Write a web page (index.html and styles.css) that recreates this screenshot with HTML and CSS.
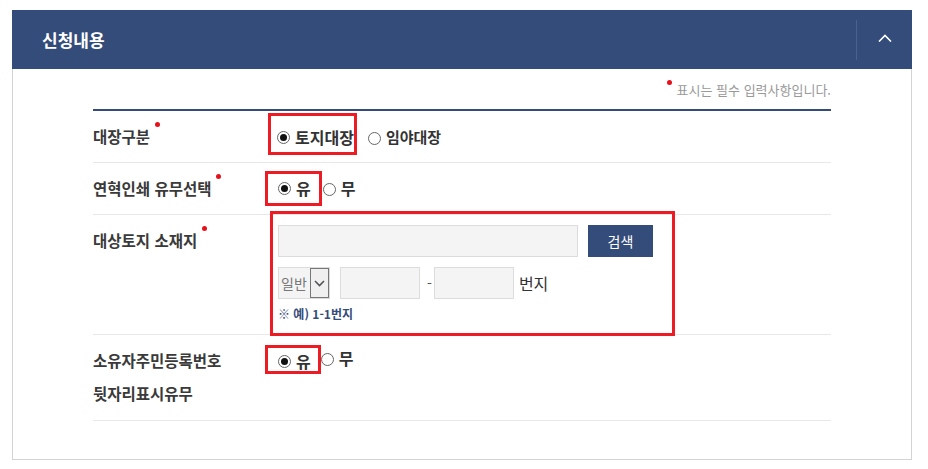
FILE: index.html
```html
<!DOCTYPE html>
<html lang="ko">

<head>
    <meta charset="utf-8">
    <link rel="stylesheet" href="styles.css">
</head>

<body>

    <div class="panel">
        <div class="panel-head">
            <h2 class="panel-title">신청내용</h2>
            <button class="toggle" type="button">
                <svg width="14" height="8" viewBox="0 0 14 8"><polyline points="1,7.5 7,1.5 13,7.5" fill="none" stroke="#fff" stroke-width="1.6"/></svg>
            </button>
        </div>

        <div class="panel-body">
            <p class="note"><span class="dot"></span>표시는 필수 입력사항입니다.</p>

            <div class="form">
                <div class="row row1">
                    <div class="label"><span class="req">대장구분</span></div>
                    <div class="value">
                        <span class="mark mark1">
                            <span class="radio on"></span><b>토지대장</b>
                        </span>
                        <span class="opt opt1"><span class="radio"></span><b>임야대장</b></span>
                    </div>
                </div>

                <div class="row row2">
                    <div class="label"><span class="req">연혁인쇄 유무선택</span></div>
                    <div class="value">
                        <span class="mark mark2">
                            <span class="radio on"></span><b>유</b>
                        </span>
                        <span class="opt opt2"><span class="radio"></span><b>무</b></span>
                    </div>
                </div>

                <div class="row row3">
                    <div class="label"><span class="req">대상토지 소재지</span></div>
                    <div class="value">
                        <div class="mark mark3">
                            <div class="line">
                                <input class="field addr" type="text">
                                <button class="btn-search" type="button">검색</button>
                            </div>
                            <div class="line line2">
                                <div class="sel">
                                    <span class="sel-text">일반</span>
                                    <span class="sel-arrow"><svg width="11" height="7" viewBox="0 0 11 7"><polyline points="1,1 5.5,5.5 10,1" fill="none" stroke="#555" stroke-width="1.6"/></svg></span>
                                </div>
                                <input class="field num" type="text">
                                <span class="dash">-</span>
                                <input class="field num" type="text">
                                <span class="unit">번지</span>
                            </div>
                            <p class="hint">※ 예) 1-1번지</p>
                        </div>
                    </div>
                </div>

                <div class="row row4">
                    <div class="label">소유자주민등록번호<br>뒷자리표시유무</div>
                    <div class="value">
                        <span class="mark mark4">
                            <span class="radio on"></span><b>유</b>
                        </span>
                        <span class="opt opt4"><span class="radio"></span><b>무</b></span>
                    </div>
                </div>
            </div>
        </div>
    </div>

</body>

</html>
```

FILE: styles.css
```css
body{
    margin: 0;
    font-family: "Noto Sans CJK KR", "Noto Sans", sans-serif;
    color: #333;
    background: #fff;
}

.panel{
    width: 900px;
    margin: 10px 0 0 12px;
}

.panel-head{
    height: 59px;
    background-color: #344c7a;
    display: flex;
    align-items: center;
    justify-content: space-between;
}

.panel-title{
    margin: 0 0 0 30px;
    font-size: 17px;
    font-weight: 700;
    color: #fff;
    line-height: 20px;
}

.toggle{
    width: 56px;
    height: 40px;
    border: none;
    border-left: 1px solid #4b6190;
    background: none;
    display: flex;
    align-items: center;
    justify-content: center;
    padding: 0 0 3px 0;
}

.panel-body{
    border: 1px solid #d4d4d4;
    border-top: none;
    height: 391px;
    box-sizing: border-box;
    padding: 11px 80px 0 80px;
}

.note{
    margin: 0 0 9px 0;
    font-size: 13px;
    line-height: 20px;
    color: #999;
    text-align: right;
}

.note .dot{
    display: inline-block;
    width: 5px;
    height: 5px;
    border-radius: 50%;
    background: #e8101a;
    vertical-align: top;
    margin: 0 5px 0 0;
}

.form{
    border-top: 2px solid #344c7a;
}

.row{
    display: grid;
    grid-template-columns: 172px 1fr;
    border-bottom: 1px solid #e8e8e8;
}

.label{
    padding: 9px 0;
    font-size: 15.5px;
    font-weight: 700;
    line-height: 33px;
    color: #3a3a3a;
}

.row4 .label{
    padding-bottom: 10px;
}

.req::after{
    content: "";
    display: inline-block;
    width: 5px;
    height: 5px;
    border-radius: 50%;
    background: #e8101a;
    vertical-align: top;
    margin: 2px 0 0 5px;
}

.value{
    display: flex;
    align-items: flex-start;
    font-size: 16px;
}

.value b{
    font-weight: 700;
    color: #333;
}

.mark{
    border: 3px solid #ed1c24;
    display: flex;
    align-items: center;
    line-height: 20px;
}

.mark1{
    margin: 2px 0 0 3px;
    padding: 11px 0 5px 6px;
}

.mark2{
    margin: 8px 0 0 0;
    padding: 4px 8px 5px 10px;
}

.mark4{
    margin: 10px 0 0 0;
    padding: 3px 7px 0 10px;
}

.opt{
    display: flex;
    align-items: center;
    line-height: 20px;
}

.opt1{
    margin: 16px 0 0 11px;
}

.opt1 b{
    font-size: 15px;
}

.opt2{
    margin: 15px 0 0 1px;
}

.opt4{
    margin: 13px 0 0 0;
}

.radio{
    width: 13px;
    height: 13px;
    box-sizing: border-box;
    border: 1px solid #666;
    border-radius: 50%;
    background: #fff;
    margin-right: 5px;
    flex: none;
    display: flex;
    align-items: center;
    justify-content: center;
}

.radio.on::after{
    content: "";
    width: 7px;
    height: 7px;
    border-radius: 50%;
    background: #111;
}

.opt .radio{
    margin-top: 2px;
}

.mark3{
    display: block;
    width: 405px;
    box-sizing: border-box;
    margin: -4px 0 -2px 5px;
    padding: 11px 5px 10px 5px;
}

.line{
    display: flex;
    align-items: center;
    gap: 10px;
}

.line2{
    margin-top: 10px;
}

.field{
    height: 32px;
    box-sizing: border-box;
    border: 1px solid #dcdcdc;
    background: #f4f4f4;
    margin: 0;
    padding: 0 6px;
}

.addr{
    width: 300px;
}

.num{
    width: 80px;
}

.btn-search{
    width: 65px;
    height: 32px;
    border: none;
    background-color: #344c7a;
    color: #fff;
    font-family: inherit;
    font-size: 14px;
    padding: 0;
}

.sel{
    width: 52px;
    height: 32px;
    box-sizing: border-box;
    border: 1px solid #dcdcdc;
    background: #f4f4f4;
    display: flex;
    align-items: stretch;
}

.sel-text{
    flex: 1;
    font-size: 14px;
    color: #777;
    line-height: 30px;
    padding-left: 2px;
}

.sel-arrow{
    width: 19px;
    border: 1px solid #777;
    box-sizing: border-box;
    background: #f0f0f0;
    display: flex;
    align-items: center;
    justify-content: center;
}

.dash{
    margin: 0 -8px 0 -3px;
    font-size: 14px;
    color: #555;
}

.unit{
    margin-left: -5px;
    font-size: 16px;
    color: #333;
}

.hint{
    margin: 6px 0 0 0;
    font-size: 12px;
    font-weight: 700;
    line-height: 18px;
    color: #344c7a;
}
```
